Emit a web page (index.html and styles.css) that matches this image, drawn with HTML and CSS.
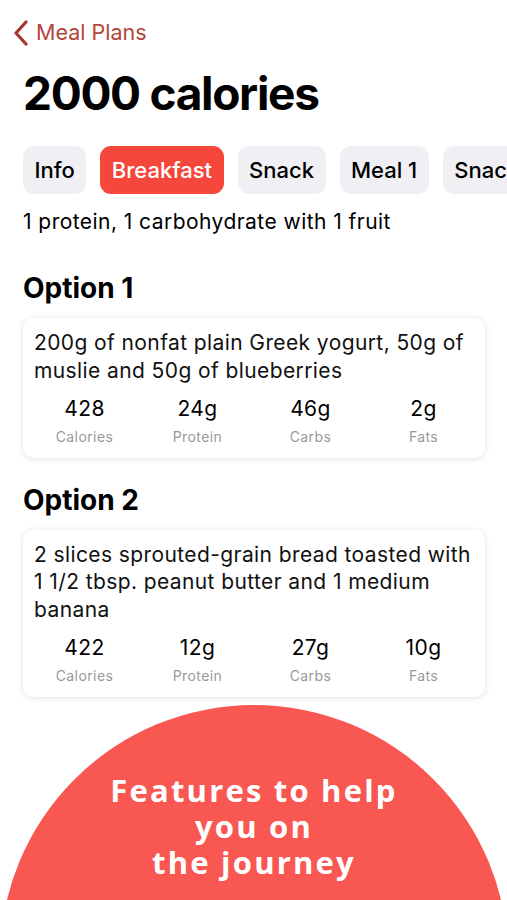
FILE: index.html
```html
<!DOCTYPE html>
<html>
<head>
  <meta charset="UTF-8">
  <title>2000 calories</title>
  <link rel="stylesheet" href="styles.css">
</head>
<body>
  <div class="page">
    <a class="back" href="#">
      <svg class="chev" width="16" height="28" viewBox="0 0 16 28"><path d="M13 4 L3 15 L13 26" fill="none" stroke="#a8352c" stroke-width="3.2" stroke-linecap="round" stroke-linejoin="round"/></svg>
      <span>Meal Plans</span>
    </a>
    <h1>2000 calories</h1>
    <div class="tabs">
      <span class="tab">Info</span>
      <span class="tab active">Breakfast</span>
      <span class="tab">Snack</span>
      <span class="tab">Meal 1</span>
      <span class="tab">Snack</span>
    </div>
    <p class="rule">1 protein, 1 carbohydrate with 1 fruit</p>

    <h2 class="first">Option 1</h2>
    <div class="card">
      <p class="desc">200g of nonfat plain Greek yogurt, 50g of muslie and 50g of blueberries</p>
      <div class="stats">
        <div class="stat"><b>428</b><small>Calories</small></div>
        <div class="stat"><b>24g</b><small>Protein</small></div>
        <div class="stat"><b>46g</b><small>Carbs</small></div>
        <div class="stat"><b>2g</b><small>Fats</small></div>
      </div>
    </div>

    <h2>Option 2</h2>
    <div class="card">
      <p class="desc">2 slices sprouted-grain bread toasted with 1 1/2 tbsp. peanut butter and 1 medium banana</p>
      <div class="stats">
        <div class="stat"><b>422</b><small>Calories</small></div>
        <div class="stat"><b>12g</b><small>Protein</small></div>
        <div class="stat"><b>27g</b><small>Carbs</small></div>
        <div class="stat"><b>10g</b><small>Fats</small></div>
      </div>
    </div>
  </div>
  <div class="promo">
    <p>Features to help<br>you on<br>the journey</p>
  </div>
</body>
</html>
```

FILE: styles.css
```css
html, body { margin: 0; height: 900px; overflow: hidden; }
body { background: #fff; color: #000; font-family: Inter, "Liberation Sans", sans-serif; }

.page { padding: 0 22px 0 23px; }

.back {
  display: flex;
  align-items: center;
  gap: 7px;
  padding-top: 18px;
  margin-left: -10px;
  color: #b5443a;
  font-size: 21.5px;
  line-height: 28px;
  text-decoration: none;
  height: 28px;
}

h1 {
  margin: 20px 0 0;
  font-size: 46px;
  font-weight: 700;
  letter-spacing: -1.3px;
  line-height: 54px;
}

.tabs {
  display: flex;
  gap: 14px;
  margin-top: 26px;
  margin-right: -22px;
  overflow: hidden;
}
.tab {
  flex: none;
  height: 48px;
  line-height: 48px;
  padding: 0 11.5px;
  border-radius: 11px;
  background: #f0f0f4;
  font-size: 22px;
  font-weight: 500;
}
.tab.active { background: #f5473b; color: #fff; }

.rule { margin: 14px 0 0; font-size: 21px; line-height: 28px; letter-spacing: 0.45px; }

h2 {
  margin: 26px 0 0;
  font-size: 28px;
  font-weight: 700;
  line-height: 32px;
}
h2.first { margin-top: 36px; }

.card {
  margin-top: 14px;
  padding: 11px 5px 11px;
  border-radius: 10px;
  background: #fff;
  box-shadow: 0 1px 6px rgba(0, 0, 0, 0.12);
}
.desc {
  margin: 0;
  padding: 0 6px;
  font-size: 21px;
  line-height: 27.5px;
  letter-spacing: 0.4px;
  color: #111;
}
.stats { display: grid; grid-template-columns: repeat(4, 1fr); margin-top: 12px; }
.stat { display: flex; flex-direction: column; align-items: center; }
.stat b { font-weight: 400; font-size: 21px; line-height: 26px; letter-spacing: 0.4px; }
.stat small { margin-top: 4.5px; font-size: 14px; color: #999; line-height: 20px; letter-spacing: 0.4px; }

.promo {
  width: 508px;
  height: 508px;
  margin: 8px auto 0;
  border-radius: 50%;
  background: #f85752;
  text-align: center;
}
.promo p {
  margin: 0;
  padding-top: 67px;
  color: #fff;
  font-family: "Open Sans", sans-serif;
  font-weight: 700;
  font-size: 31px;
  line-height: 36px;
  letter-spacing: 2.2px;
}
```
